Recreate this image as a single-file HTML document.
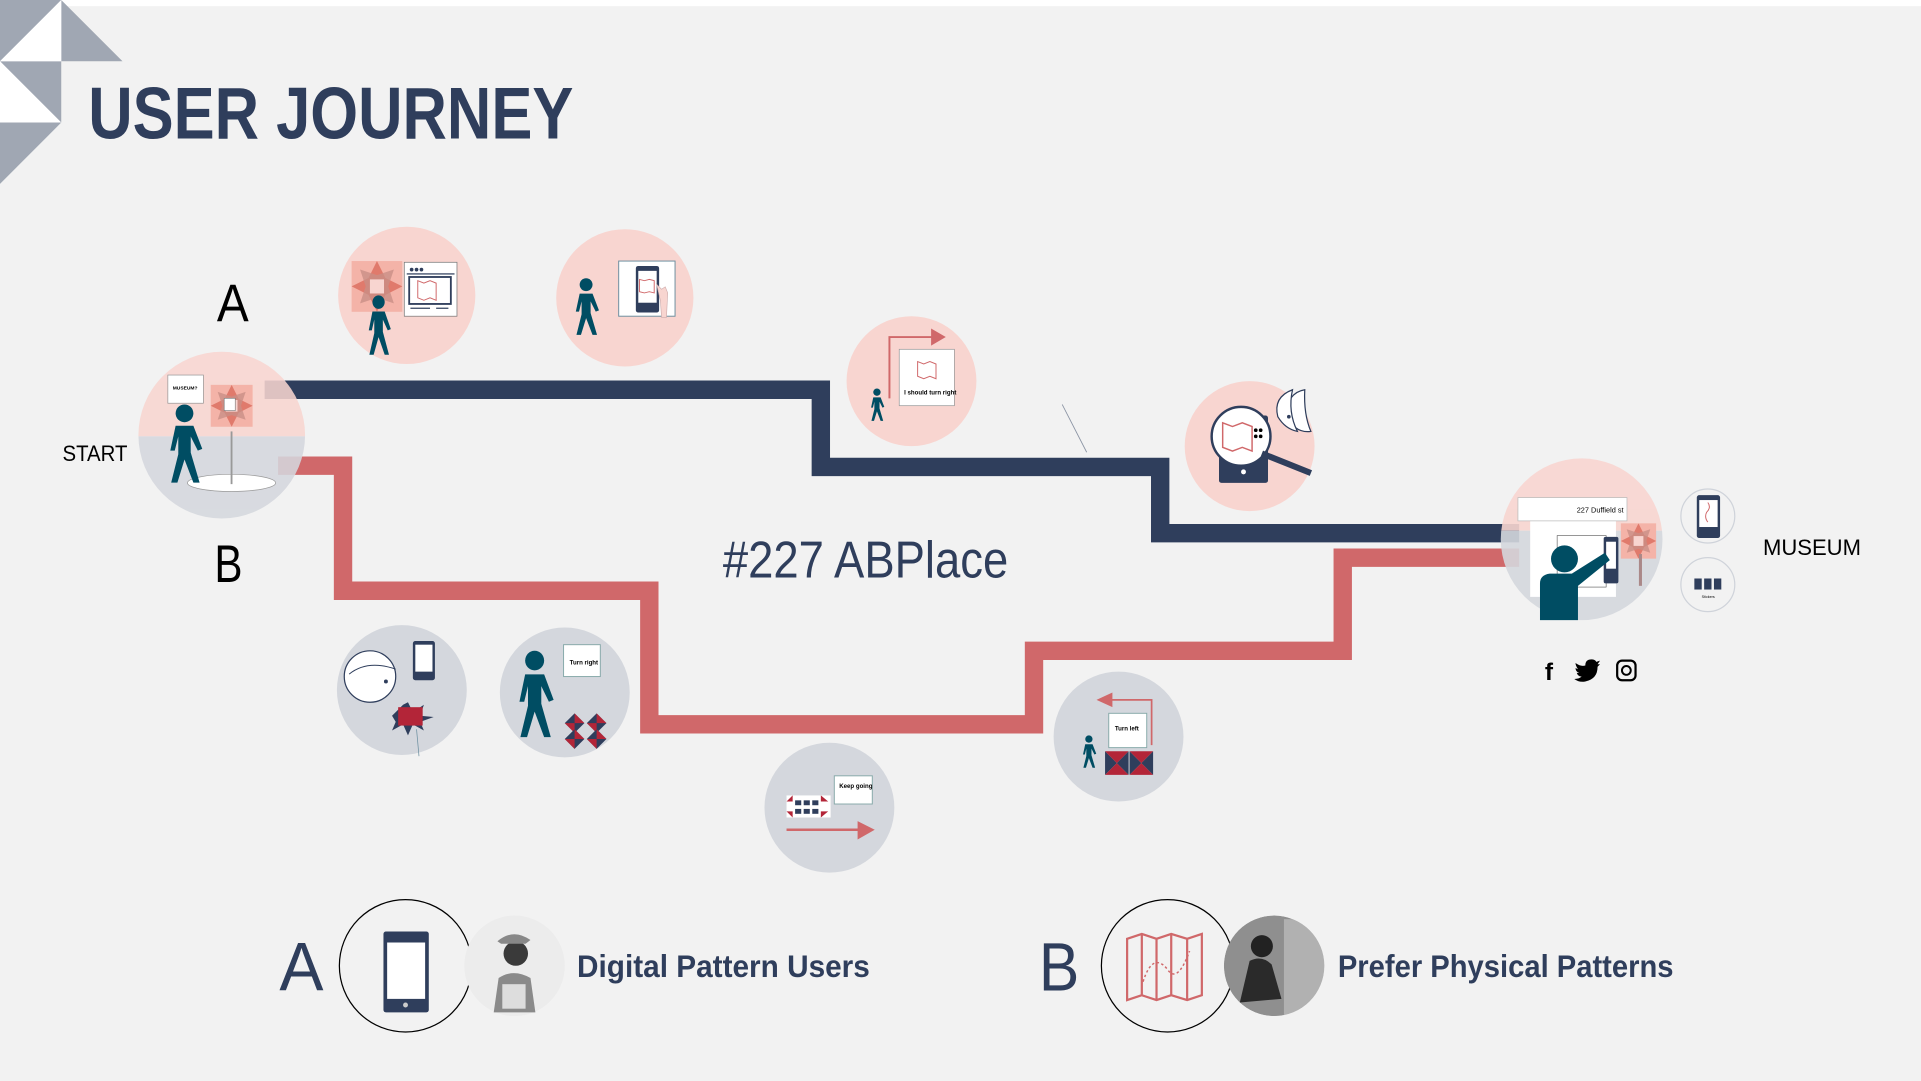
<!DOCTYPE html>
<html><head><meta charset="utf-8"><style>
html,body{margin:0;padding:0;background:#f2f2f2;overflow:hidden}
svg{display:block}
text{font-family:"Liberation Sans",sans-serif}
</style></head><body>
<svg width="1921" height="1081" viewBox="0 0 1568 882" preserveAspectRatio="none" xmlns="http://www.w3.org/2000/svg">
<defs>
<g id="walker">
<circle cx="8" cy="5" r="5"/>
<path d="M3,12 h10 l5,13 l-2.5,1 l-4,-8 v9 l5,17 h-3.5 l-5,-13 l-4,13 h-3.5 l4,-16 v-10 l-2,8 h-2.5 z"/>
</g>
<g id="star">
<rect x="0" y="0" width="36" height="36" fill="#f4b3a8"/>
<polygon points="18,0 24,12 36,18 24,24 18,36 12,24 0,18 12,12" fill="#e07a6c"/>
<polygon points="6,6 18,10 30,6 26,18 30,30 18,26 6,30 10,18" fill="#c98f86" opacity="0.8"/>
<rect x="13" y="13" width="10" height="10" fill="#f8d5d0"/>
</g>
<g id="diam">
<polygon points="8,0 16,8 8,16 0,8" fill="#2f3e5c"/>
<polygon points="8,0 16,8 8,8" fill="#b32538"/>
<polygon points="0,8 8,8 8,16" fill="#b32538"/>
</g>
<g id="bow">
<polygon points="0,0 8,8 0,16" fill="#2f3e5c"/><polygon points="16,0 8,8 16,16" fill="#2f3e5c"/>
<polygon points="0,0 16,0 8,8" fill="#b32538"/><polygon points="0,16 16,16 8,8" fill="#b32538"/>
</g>
<clipPath id="cb"><circle cx="1040" cy="788" r="41"/></clipPath>
</defs>
<rect width="1568" height="882" fill="#f2f2f2"/>
<rect width="1568" height="5" fill="#fff"/>
<g fill="#a0a7b3">
<polygon points="0,0 50,0 0,50"/>
<polygon points="50,0 100,50 50,50"/>
<polygon points="0,50 50,50 50,100"/>
<polygon points="0,100 50,100 0,150"/>
</g>
<polygon points="50,0 50,50 0,50" fill="#fff"/>
<polygon points="0,50 50,100 0,100" fill="#fff"/>
<text x="72" y="113" font-size="60" font-weight="bold" fill="#2f3e5c" textLength="396" lengthAdjust="spacingAndGlyphs">USER JOURNEY</text>

<text x="177" y="262" font-size="43" fill="#000" textLength="26" lengthAdjust="spacingAndGlyphs">A</text>
<text x="175" y="475" font-size="43" fill="#000" textLength="23" lengthAdjust="spacingAndGlyphs">B</text>
<text x="51" y="376" font-size="18" fill="#000" textLength="53" lengthAdjust="spacingAndGlyphs">START</text>
<text x="1439" y="453" font-size="18" fill="#000" textLength="80" lengthAdjust="spacingAndGlyphs">MUSEUM</text>
<text x="590" y="471" font-size="42" fill="#2f3e5c" textLength="233" lengthAdjust="spacingAndGlyphs">#227 ABPlace</text>

<line x1="867" y1="330" x2="887" y2="369" stroke="#8a93a3" stroke-width="0.7"/>
<polyline points="216,318 670,318 670,381 947,381 947,435 1240,435" fill="none" stroke="#2f3e5c" stroke-width="15"/>
<polyline points="227,380 280,380 280,482 530,482 530,591 844,591 844,531 1096,531 1096,455 1240,455" fill="none" stroke="#d0686a" stroke-width="15"/>

<clipPath id="cs"><circle cx="181" cy="355" r="68"/></clipPath>
<g clip-path="url(#cs)" opacity="0.88">
<rect x="100" y="280" width="160" height="76" fill="#f8d5d0"/>
<rect x="100" y="356" width="160" height="80" fill="#d4d7dd"/>
</g>
<ellipse cx="189" cy="394" rx="36" ry="7" fill="#fff" stroke="#999" stroke-width="0.6"/>
<line x1="189" y1="352" x2="189" y2="395" stroke="#999" stroke-width="1.5"/>
<use href="#star" transform="translate(172,314) scale(0.95)"/>
<rect x="183" y="325" width="9" height="10" fill="#fff" stroke="#777" stroke-width="0.5"/>
<rect x="137" y="306" width="29" height="23" fill="#fff" stroke="#999" stroke-width="0.6"/>
<text x="141" y="318" font-size="4" font-weight="bold">MUSEUM?</text>
<use href="#walker" fill="#004d63" transform="translate(139,330) scale(1.45)"/>

<circle cx="332" cy="241" r="56" fill="#f8d5d0"/>
<use href="#star" transform="translate(287,213) scale(1.15)"/>
<rect x="330" y="214" width="43" height="44" fill="#fff" stroke="#777" stroke-width="0.6"/>
<circle cx="336" cy="220" r="1.5" fill="#2f3e5c"/><circle cx="340" cy="220" r="1.5" fill="#2f3e5c"/><circle cx="344" cy="220" r="1.5" fill="#2f3e5c"/>
<rect x="332" y="223" width="39" height="1" fill="#2f3e5c"/>
<rect x="334" y="226" width="34" height="22" fill="#fff" stroke="#2f3e5c" stroke-width="1.5"/>
<path d="M341,229 l5,2 5,-2 5,2 v14 l-5,-2 -5,2 -5,-2z" fill="none" stroke="#d0686a" stroke-width="0.8"/>
<rect x="335" y="251" width="16" height="1" fill="#2f3e5c"/><rect x="356" y="251" width="10" height="1" fill="#2f3e5c"/>
<use href="#walker" fill="#004d63" transform="translate(301,241) scale(1.0,1.1)"/>

<circle cx="510" cy="243" r="56" fill="#f8d5d0"/>
<rect x="505" y="213" width="46" height="45" fill="#fff" stroke="#6c8fa0" stroke-width="0.8"/>
<rect x="519" y="217" width="19" height="38" rx="2" fill="#2f3e5c"/>
<rect x="521" y="221" width="15" height="26" fill="#fff"/>
<path d="M522,228 l4,1 4,-1 4,1 v10 l-4,-1 -4,1 -4,-1z" fill="none" stroke="#d0686a" stroke-width="0.8"/>
<path d="M536,232 l4,4 3,-2 2,5 -1,20 h-4 l-1,-14z" fill="#f8d5d0" stroke="#caa" stroke-width="0.5"/>
<use href="#walker" fill="#004d63" transform="translate(470,227) scale(1.05)"/>

<circle cx="744" cy="311" r="53" fill="#f8d5d0"/>
<polyline points="726,325 726,275 762,275" fill="none" stroke="#d0686a" stroke-width="1.6"/>
<polygon points="760,268 772,275 760,282" fill="#d0686a"/>
<rect x="734" y="285" width="45" height="46" fill="#fff" stroke="#999" stroke-width="0.6"/>
<path d="M749,295 l5,2 5,-2 5,2 v12 l-5,-2 -5,2 -5,-2z" fill="none" stroke="#d0686a" stroke-width="0.8"/>
<text x="738" y="322" font-size="5" font-weight="bold">I should turn right</text>
<use href="#walker" fill="#004d63" transform="translate(711,317) scale(0.6)"/>

<circle cx="1020" cy="364" r="53" fill="#f8d5d0"/>
<rect x="995" y="339" width="40" height="55" rx="2" fill="#2f3e5c"/>
<circle cx="1015" cy="385" r="2" fill="#fff"/>
<circle cx="1013" cy="356" r="24" fill="#fff" stroke="#2f3e5c" stroke-width="2"/>
<line x1="1030" y1="370" x2="1070" y2="386" stroke="#2f3e5c" stroke-width="5"/>
<path d="M998,345 l8,3 8,-3 8,3 v20 l-8,-3 -8,3 -8,-3z" fill="none" stroke="#d0686a" stroke-width="1.2"/>
<circle cx="1025" cy="351" r="1.5"/><circle cx="1029" cy="351" r="1.5"/><circle cx="1025" cy="356" r="1.5"/><circle cx="1029" cy="356" r="1.5"/>
<path d="M1065,318 a17,17 0 0 0 5,34 q-6,-14 -5,-34z" fill="#fff" stroke="#2f3e5c" stroke-width="1"/>
<path d="M1055,318 q-16,6 -12,22 q6,10 16,12 q-8,-16 -4,-34z" fill="#fff" stroke="#2f3e5c" stroke-width="1"/>
<circle cx="1052" cy="340" r="1.5" fill="#2f3e5c"/>

<clipPath id="ce"><circle cx="1291" cy="440" r="66"/></clipPath>
<g clip-path="url(#ce)" opacity="0.9">
<rect x="1220" y="370" width="140" height="63" fill="#f8d5d0"/>
<rect x="1220" y="433" width="140" height="80" fill="#d4d7dd"/>
</g>
<rect x="1249" y="424" width="70" height="63" fill="#fff"/>
<rect x="1239" y="406" width="89" height="19" fill="#fff" stroke="#bbb" stroke-width="0.6"/>
<text x="1287" y="418" font-size="6">227 Duffield st</text>
<use href="#star" transform="translate(1323,427) scale(0.8)"/>
<line x1="1339" y1="452" x2="1339" y2="478" stroke="#aa8888" stroke-width="2.5"/>
<rect x="1271" y="437" width="40" height="42" fill="#fff" stroke="#555" stroke-width="0.5"/>
<rect x="1309" y="438" width="12" height="38" rx="1.5" fill="#2f3e5c"/>
<rect x="1311" y="442" width="8" height="22" fill="#fff"/>
<circle cx="1277" cy="456" r="11" fill="#004d63"/>
<path d="M1257,506 v-30 q0,-7 8,-8 h18 l27,-17 4,6 -26,21 v28z" fill="#004d63"/>

<circle cx="1394" cy="421" r="22" fill="#f2f2f2" stroke="#cfd3da" stroke-width="1"/>
<rect x="1385" y="404" width="19" height="35" rx="2" fill="#2f3e5c"/>
<rect x="1387" y="408" width="15" height="22" fill="#fff"/>
<path d="M1394,410 q3,4 -1,8 q-2,4 1,8" fill="none" stroke="#d0686a" stroke-width="0.8"/>
<circle cx="1394" cy="477" r="22" fill="#f2f2f2" stroke="#cfd3da" stroke-width="1"/>
<rect x="1383" y="472" width="6" height="9" fill="#2f3e5c"/><rect x="1391" y="472" width="6" height="9" fill="#2f3e5c"/><rect x="1399" y="472" width="6" height="9" fill="#2f3e5c"/>
<text x="1389" y="488" font-size="3">Stickers</text>

<text x="1261" y="555" font-size="20" font-weight="bold">f</text>
<path d="M1286,541 q4,3 8,2 q0,-5 5,-5 q3,0 4,2 l3,-1 -2,3 2,0 -2,2 q0,10 -10,12 q-5,1 -9,-2 q4,0 6,-2 q-3,0 -4,-3 h2 q-3,-1 -3,-4 l2,1 q-2,-3 -2,-5z" fill="#000"/>
<rect x="1320" y="539" width="15" height="16" rx="4" fill="none" stroke="#000" stroke-width="1.8"/>
<circle cx="1327.5" cy="547" r="3.6" fill="none" stroke="#000" stroke-width="1.6"/>

<circle cx="328" cy="563" r="53" fill="#d4d7dd"/>
<circle cx="302" cy="552" r="21" fill="#fff" stroke="#2f3e5c" stroke-width="1"/>
<path d="M285,550 q15,-12 38,-4" fill="none" stroke="#2f3e5c" stroke-width="0.8"/>
<circle cx="315" cy="556" r="1.6" fill="#2f3e5c"/>
<rect x="337" y="523" width="18" height="32" rx="2" fill="#2f3e5c"/>
<rect x="339" y="526" width="14" height="22" fill="#fff"/>
<polygon points="333,573 337,581 346,575 343,584 354,585 343,589 346,596 337,591 333,600 329,591 320,596 323,589 320,584 323,581 329,575" fill="#2f3e5c"/>
<rect x="325" y="577" width="20" height="15" fill="#b32538"/>
<line x1="340" y1="595" x2="342" y2="617" stroke="#6c8fa0" stroke-width="0.6"/>

<circle cx="461" cy="565" r="53" fill="#d4d7dd"/>
<rect x="460" y="526" width="30" height="26" fill="#fff" stroke="#8aa" stroke-width="0.8"/>
<text x="465" y="542" font-size="5" font-weight="bold">Turn right</text>
<use href="#walker" fill="#004d63" transform="translate(424,531) scale(1.55,1.6)"/>
<g transform="translate(461,582)"><use href="#diam"/><use href="#diam" x="18"/><use href="#diam" y="13"/><use href="#diam" x="18" y="13"/></g>

<circle cx="677" cy="659" r="53" fill="#d4d7dd"/>
<rect x="681" y="633" width="31" height="23" fill="#fff" stroke="#8aa" stroke-width="0.8"/>
<text x="685" y="643" font-size="5" font-weight="bold">Keep going</text>
<g transform="translate(642,649)">
<rect x="0" y="0" width="36" height="18" fill="#fff"/>
<rect x="7" y="4" width="5" height="4" fill="#2f3e5c"/><rect x="14" y="4" width="5" height="4" fill="#2f3e5c"/><rect x="21" y="4" width="5" height="4" fill="#2f3e5c"/>
<rect x="7" y="11" width="5" height="4" fill="#2f3e5c"/><rect x="14" y="11" width="5" height="4" fill="#2f3e5c"/><rect x="21" y="11" width="5" height="4" fill="#2f3e5c"/>
<polygon points="0,5 5,0 5,5" fill="#b32538"/><polygon points="28,0 34,5 28,5" fill="#b32538"/><polygon points="0,13 5,13 5,18" fill="#b32538"/><polygon points="28,13 34,13 28,18" fill="#b32538"/>
</g>
<line x1="642" y1="677" x2="703" y2="677" stroke="#d0686a" stroke-width="2"/>
<polygon points="700,670 714,677 700,685" fill="#d0686a"/>

<circle cx="913" cy="601" r="53" fill="#d4d7dd"/>
<polyline points="905,571 940,571 940,608" fill="none" stroke="#d0686a" stroke-width="1.4"/>
<polygon points="908,565 895,571 908,577" fill="#d0686a"/>
<rect x="905" y="582" width="31" height="28" fill="#fff" stroke="#8aa" stroke-width="0.8"/>
<text x="910" y="596" font-size="5" font-weight="bold">Turn left</text>
<use href="#walker" fill="#004d63" transform="translate(884,600) scale(0.6)"/>
<g transform="translate(902,613)"><use href="#bow" transform="scale(1.2,1.2)"/><use href="#bow" transform="translate(20,0) scale(1.2,1.2)"/></g>

<text x="228" y="808" font-size="56" fill="#2f3e5c" textLength="36" lengthAdjust="spacingAndGlyphs">A</text>
<ellipse cx="331" cy="788" rx="54" ry="54" fill="none" stroke="#000" stroke-width="1"/>
<rect x="313" y="760" width="37" height="66" rx="2" fill="#2f3e5c"/>
<rect x="316" y="769" width="31" height="46" fill="#fff"/>
<circle cx="331" cy="820" r="2" fill="#ccc"/>
<circle cx="420" cy="788" r="41" fill="#ececec"/>
<path d="M403,826 l4,-28 q12,-8 26,0 l4,28z" fill="#8a8a8a"/>
<rect x="410" y="803" width="19" height="20" fill="#ddd"/>
<circle cx="421" cy="778" r="10" fill="#3a3a3a"/>
<path d="M406,768 q13,-11 27,-1 l-4,3 h-20z" fill="#888"/>
<text x="471" y="797" font-size="26" font-weight="bold" fill="#2f3e5c" textLength="239" lengthAdjust="spacingAndGlyphs">Digital Pattern Users</text>

<text x="848" y="808" font-size="56" fill="#2f3e5c" textLength="33" lengthAdjust="spacingAndGlyphs">B</text>
<ellipse cx="953" cy="788" rx="54" ry="54" fill="none" stroke="#000" stroke-width="1"/>
<path d="M920,766 l12,-4 12,4 12,-4 13,4 12,-4 v50 l-12,4 -13,-4 -12,4 -12,-4 -12,4z M932,762 v50 M944,766 v50 M956,762 v50 M969,766 v50" fill="none" stroke="#d0686a" stroke-width="1.8"/>
<path d="M933,801 q8,-25 20,-10 q8,12 18,-15" fill="none" stroke="#d0686a" stroke-width="1.2" stroke-dasharray="2,2"/>
<g clip-path="url(#cb)">
<circle cx="1040" cy="788" r="41" fill="#8f8f8f"/>
<rect x="1048" y="750" width="40" height="80" fill="#c8c8c8" opacity="0.6"/>
<circle cx="1030" cy="772" r="9" fill="#222"/>
<path d="M1012,818 l8,-34 q10,-5 18,3 l8,28z" fill="#2a2a2a"/>
</g>
<text x="1092" y="797" font-size="26" font-weight="bold" fill="#2f3e5c" textLength="274" lengthAdjust="spacingAndGlyphs">Prefer Physical Patterns</text>
</svg>
</body></html>
